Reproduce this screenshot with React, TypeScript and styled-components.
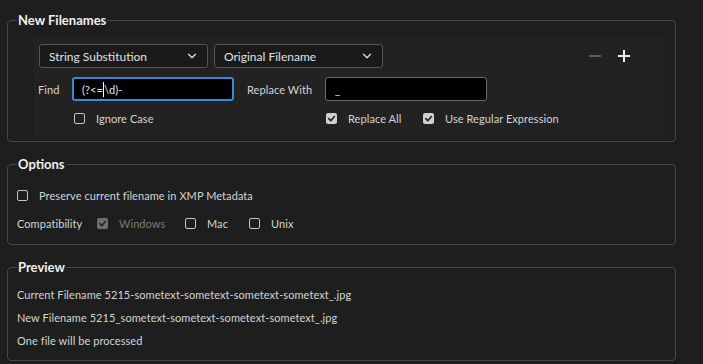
import { createGlobalStyle } from "styled-components";
import styled from "styled-components";
import { ChevronDown } from "lucide-react";

const GlobalStyle = createGlobalStyle`
  html, body {
    margin: 0;
    padding: 0;
    background-color: #1e1e1e;
  }
  body {
    font-family: Lato, "Noto Sans", sans-serif;
    font-size: 11px;
    letter-spacing: 0.07px;
    color: #d4d4d4;
  }
`;

const Page = styled.div`
  width: 703px;
  height: 364px;
  padding: 11px 0 0 7px;
  box-sizing: border-box;
  display: flex;
  flex-direction: column;
  gap: 13px;
`;

const Group = styled.fieldset<{ $height: number }>`
  margin: 0;
  width: 669px;
  height: ${(p) => p.$height}px;
  box-sizing: border-box;
  border: 1px solid #474747;
  border-radius: 4px;
  padding: 0 9px;
  min-inline-size: 0;
`;

const Legend = styled.legend`
  padding: 0 1px;
  font-size: 13px;
  font-weight: 700;
  line-height: 18px;
  letter-spacing: 0;
  color: #f0f0f0;
`;

const Panel = styled.div`
  margin: 9px 2px 0 17px;
  background-color: #222222;
  padding: 6px 5px 10px 5px;
  display: flex;
  flex-direction: column;
`;

const Row = styled.div<{ $top?: number }>`
  display: flex;
  align-items: center;
  margin-top: ${(p) => p.$top ?? 0}px;
`;

const Select = styled.div`
  width: 169px;
  height: 24px;
  box-sizing: border-box;
  border: 1px solid #555;
  border-radius: 3px;
  background-color: #1a1a1a;
  display: flex;
  align-items: center;
  justify-content: space-between;
  padding: 0 8px 0 9px;
  color: #e0e0e0;
  font-size: 12px;
  letter-spacing: 0;
  & + & {
    margin-left: 6px;
  }
`;

const Actions = styled.div`
  margin-left: auto;
  margin-right: 29px;
  display: flex;
  gap: 17px;
  align-items: center;
`;

const Sign = styled.span<{ $dim?: boolean }>`
  position: relative;
  width: 12px;
  height: 12px;
  display: inline-block;
  &::before,
  &::after {
    content: "";
    position: absolute;
    background: ${(p) => (p.$dim ? "#5c5c5c" : "#eeeeee")};
  }
  &::before {
    left: 0;
    top: 5px;
    width: 12px;
    height: 2px;
  }
  &::after {
    display: ${(p) => (p.$dim ? "none" : "block")};
    left: 5px;
    top: 0;
    width: 2px;
    height: 12px;
  }
`;

const Label = styled.span<{ $width: number; $left?: number }>`
  width: ${(p) => p.$width}px;
  margin-left: ${(p) => p.$left ?? 0}px;
  color: #d4d4d4;
`;

const Field = styled.div<{ $focus?: boolean; $width: number }>`
  width: ${(p) => p.$width}px;
  height: 24px;
  box-sizing: border-box;
  background-color: #000;
  border: ${(p) => (p.$focus ? "2px solid #3b88d6" : "1px solid #6a6a6a")};
  border-radius: 3px;
  padding-left: ${(p) => (p.$focus ? 8 : 9)}px;
  display: flex;
  align-items: center;
  color: #e8e8e8;
`;

const Caret = styled.span`
  display: inline-block;
  width: 1px;
  height: 15px;
  background: #ffffff;
`;

const Check = styled.label<{ $left?: number; $width?: number; $muted?: boolean }>`
  display: flex;
  align-items: center;
  gap: 11px;
  margin-left: ${(p) => p.$left ?? 0}px;
  width: ${(p) => (p.$width ? `${p.$width}px` : "auto")};
  color: ${(p) => (p.$muted ? "#7a7a7a" : "#d4d4d4")};
`;

const Box = styled.span<{ $checked?: boolean; $muted?: boolean }>`
  width: 11px;
  height: 11px;
  flex: none;
  box-sizing: border-box;
  border-radius: 2px;
  border: ${(p) => (p.$checked ? "none" : "1.5px solid #c4c4c4")};
  background-color: ${(p) =>
    p.$checked ? (p.$muted ? "#6f6f6f" : "#cfcfcf") : "transparent"};
  display: flex;
  align-items: center;
  justify-content: center;
`;

const OptionsBody = styled.div`
  padding-top: 11px;
  display: flex;
  flex-direction: column;
  gap: 6px;
`;

const OptionRow = styled.div`
  height: 22px;
  display: flex;
  align-items: center;
`;

const PreviewBody = styled.div`
  padding-top: 7px;
  display: flex;
  flex-direction: column;
`;

const Line = styled.div`
  line-height: 23px;
  height: 23px;
`;

function Tick({ muted }: { muted?: boolean }) {
  return (
    <svg width="9" height="9" viewBox="0 0 10 10">
      <path
        d="M2 5.2 L4.2 7.4 L8.2 2.8"
        fill="none"
        stroke={muted ? "#222" : "#1e1e1e"}
        strokeWidth="1.8"
        strokeLinecap="round"
        strokeLinejoin="round"
      />
    </svg>
  );
}

function CheckItem({
  label,
  checked,
  muted,
  left,
  width,
}: {
  label: string;
  checked?: boolean;
  muted?: boolean;
  left?: number;
  width?: number;
}) {
  return (
    <Check $left={left} $width={width} $muted={muted}>
      <Box $checked={checked} $muted={muted}>
        {checked && <Tick muted={muted} />}
      </Box>
      {label}
    </Check>
  );
}

export default function App() {
  return (
    <>
      <GlobalStyle />
      <Page>
        <Group $height={131}>
          <Legend>New Filenames</Legend>
          <Panel>
            <Row>
              <Select>
                String Substitution
                <ChevronDown size={14} strokeWidth={2.2} color="#dddddd" />
              </Select>
              <Select>
                Original Filename
                <ChevronDown size={14} strokeWidth={2.2} color="#dddddd" />
              </Select>
              <Actions>
                <Sign $dim />
                <Sign />
              </Actions>
            </Row>
            <Row $top={9}>
              <Label $width={34} $left={-1}>
                Find
              </Label>
              <Field $focus $width={162}>
                (?&lt;=
                <Caret />
                \d)-
              </Field>
              <Label $width={78} $left={13}>
                Replace With
              </Label>
              <Field $width={162}>_</Field>
            </Row>
            <Row $top={11}>
              <CheckItem label="Ignore Case" left={35} width={252} />
              <CheckItem label="Replace All" checked width={97} />
              <CheckItem label="Use Regular Expression" checked />
            </Row>
          </Panel>
        </Group>
        <Group $height={90}>
          <Legend>Options</Legend>
          <OptionsBody>
            <OptionRow>
              <CheckItem label="Preserve current filename in XMP Metadata" />
            </OptionRow>
            <OptionRow>
              <Label $width={80}>Compatibility</Label>
              <CheckItem label="Windows" checked muted width={88} />
              <CheckItem label="Mac" width={64} />
              <CheckItem label="Unix" />
            </OptionRow>
          </OptionsBody>
        </Group>
        <Group $height={103}>
          <Legend>Preview</Legend>
          <PreviewBody>
            <Line>Current Filename 5215-sometext-sometext-sometext-sometext_.jpg</Line>
            <Line>New Filename 5215_sometext-sometext-sometext-sometext_.jpg</Line>
            <Line>One file will be processed</Line>
          </PreviewBody>
        </Group>
      </Page>
    </>
  );
}
